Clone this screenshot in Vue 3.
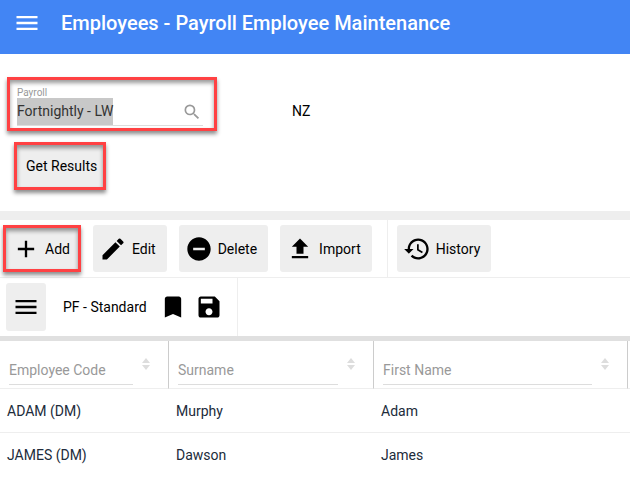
<script setup>
import { onMounted, ref } from 'vue'

const payroll = ref('Fortnightly - LW')
const payrollInput = ref(null)

const icons = {
  menu: 'M3 18h18v-2H3v2zm0-5h18v-2H3v2zm0-7v2h18V6H3z',
  add: 'M19 13h-6v6h-2v-6H5v-2h6V5h2v6h6v2z',
  edit: 'M3 17.25V21h3.75L17.81 9.94l-3.75-3.75L3 17.25zM20.71 7.04a1 1 0 0 0 0-1.41l-2.34-2.34a1 1 0 0 0-1.41 0l-1.83 1.83 3.75 3.75 1.83-1.83z',
  remove: 'M12 2C6.48 2 2 6.48 2 12s4.48 10 10 10 10-4.48 10-10S17.52 2 12 2zm5 11H7v-2h10v2z',
  upload: 'M9 16h6v-6h4l-7-7-7 7h4v6zm-4 2h14v2H5v-2z',
  history: 'M13 3c-4.97 0-9 4.03-9 9H1l3.89 3.89.07.14L9 12H6c0-3.87 3.13-7 7-7s7 3.13 7 7-3.13 7-7 7c-1.93 0-3.68-.79-4.94-2.06l-1.42 1.42C8.27 19.99 10.51 21 13 21c4.97 0 9-4.03 9-9s-4.03-9-9-9zm-1 5v5l4.28 2.54.72-1.21-3.5-2.08V8H12z',
  bookmark: 'M17 3H7c-1.1 0-2 .9-2 2v16l7-3 7 3V5c0-1.1-.9-2-2-2z',
  save: 'M17 3H5c-1.11 0-2 .9-2 2v14c0 1.1.89 2 2 2h14c1.1 0 2-.9 2-2V7l-4-4zm-5 16c-1.66 0-3-1.34-3-3s1.34-3 3-3 3 1.34 3 3-1.34 3-3 3zm3-10H5V5h10v4z',
  search: 'M15.5 14h-.79l-.28-.27A6.47 6.47 0 0 0 16 9.5 6.5 6.5 0 1 0 9.5 16c1.61 0 3.09-.59 4.23-1.57l.27.28v.79l5 4.99L20.49 19l-4.99-5zm-6 0C7.01 14 5 11.99 5 9.5S7.01 5 9.5 5 14 7.01 14 9.5 11.99 14 9.5 14z',
}

const actionGroups = [
  [
    { label: 'Add', icon: 'add', marked: true },
    { label: 'Edit', icon: 'edit' },
    { label: 'Delete', icon: 'remove' },
    { label: 'Import', icon: 'upload' },
  ],
  [{ label: 'History', icon: 'history' }],
]

const columns = [
  { key: 'code', label: 'Employee Code' },
  { key: 'surname', label: 'Surname' },
  { key: 'first', label: 'First Name' },
]
const filters = ref({ code: '', surname: '', first: '' })

const rows = [
  { code: 'ADAM (DM)', surname: 'Murphy', first: 'Adam' },
  { code: 'JAMES (DM)', surname: 'Dawson', first: 'James' },
]

onMounted(() => {
  payrollInput.value.focus()
  payrollInput.value.select()
})
</script>

<template>
  <div class="page">
    <header class="app-bar">
      <button class="plain" type="button" aria-label="Menu">
        <svg class="icon" viewBox="0 0 24 24"><path :d="icons.menu" /></svg>
      </button>
      <h1>Employees - Payroll Employee Maintenance</h1>
    </header>

    <section class="criteria">
      <div class="criteria-row">
        <div class="field marked">
          <label for="payroll">Payroll</label>
          <div class="field-line">
            <input id="payroll" ref="payrollInput" v-model="payroll" type="text" autocomplete="off" spellcheck="false" />
            <button class="plain lookup" type="button" aria-label="Search">
              <svg class="icon small" viewBox="0 0 24 24"><path :d="icons.search" /></svg>
            </button>
          </div>
        </div>
        <span class="country">NZ</span>
      </div>
      <button class="results marked" type="button">Get Results</button>
    </section>

    <div class="toolbar">
      <div v-for="(group, i) in actionGroups" :key="i" class="group">
        <button v-for="a in group" :key="a.label" class="action" :class="{ marked: a.marked }" type="button">
          <svg class="icon" viewBox="0 0 24 24"><path :d="icons[a.icon]" /></svg>
          <span>{{ a.label }}</span>
        </button>
      </div>
    </div>

    <div class="layout-bar">
      <div class="layout-group">
        <button class="layout-menu" type="button" aria-label="Layouts">
          <svg class="icon" viewBox="0 0 24 24"><path :d="icons.menu" /></svg>
        </button>
        <span class="layout-name">PF - Standard</span>
        <button class="plain" type="button" aria-label="Bookmark">
          <svg class="icon" viewBox="0 0 24 24"><path :d="icons.bookmark" /></svg>
        </button>
        <button class="plain" type="button" aria-label="Save">
          <svg class="icon" viewBox="0 0 24 24"><path :d="icons.save" /></svg>
        </button>
      </div>
    </div>

    <table class="grid">
      <colgroup>
        <col class="col-code" />
        <col class="col-surname" />
        <col />
        <col class="col-end" />
      </colgroup>
      <thead>
        <tr>
          <th v-for="c in columns" :key="c.key" scope="col">
            <div class="filter">
              <input v-model="filters[c.key]" type="text" :placeholder="c.label" :aria-label="c.label" />
              <button class="plain sort" type="button" :aria-label="'Sort by ' + c.label">
                <svg viewBox="0 0 8 12"><path d="M0 5l4-5 4 5zM0 7h8l-4 5z" /></svg>
              </button>
            </div>
          </th>
          <td class="end"></td>
        </tr>
      </thead>
      <tbody>
        <tr v-for="r in rows" :key="r.code">
          <td v-for="c in columns" :key="c.key">{{ r[c.key] }}</td>
          <td class="end"></td>
        </tr>
      </tbody>
    </table>
  </div>
</template>

<style>
body {
  margin: 0;
  background: #fff;
}
</style>

<style scoped>
.page,
.page button,
.page input {
  font-family: Roboto, "Liberation Sans", sans-serif;
  font-size: 14px;
  color: #000;
}

.page * {
  box-sizing: border-box;
}

button {
  border: 0;
  padding: 0;
  background: #eee;
  border-radius: 3px;
  cursor: pointer;
}

input {
  min-width: 0;
  border: 0;
  padding: 0;
  outline: 0;
  background: none;
}

.plain {
  display: flex;
  background: none;
}

.icon {
  display: block;
  width: 28px;
  height: 28px;
  fill: currentColor;
}

.icon.small {
  width: 20px;
  height: 20px;
}

.page .marked {
  position: relative;
  border: 3px solid #ff4143;
  border-radius: 0;
  box-shadow: 0 3px 4px rgba(0, 0, 0, 0.45), inset 0 3px 4px rgba(0, 0, 0, 0.4);
}

.app-bar {
  display: flex;
  align-items: center;
  gap: 20px;
  height: 54px;
  padding: 0 13px 8px;
  background: #4285f4;
}

.page .app-bar .plain,
h1 {
  color: #fff;
}

h1 {
  margin: 0;
  font-size: 20px;
  font-weight: 500;
  line-height: 28px;
  white-space: nowrap;
}

.criteria {
  padding: 23px 7px 21px;
  border-bottom: 9px solid #eee;
}

.criteria-row {
  display: flex;
  align-items: center;
  gap: 75px;
}

.field {
  width: 210px;
  height: 54px;
  padding: 7px 11px 0 7px;
}

.field label {
  display: block;
  font-size: 10px;
  line-height: 11px;
  color: #999;
}

.field-line {
  display: flex;
  align-items: center;
  padding-right: 1px;
  border-bottom: 1px solid #ddd;
}

.page .field-line input {
  flex: 1;
  height: 27px;
  line-height: 27px;
  color: #333;
}

.field-line input::selection {
  background: #c8c8c8;
  color: #333;
}

.page .lookup {
  color: #999;
}

.country {
  padding-top: 14px;
}

.results {
  display: block;
  height: 48px;
  margin: 11px 7px 0;
  padding: 0 6px 0 9px;
}

.toolbar {
  display: flex;
  border-bottom: 1px solid #eee;
}

.group {
  display: flex;
  gap: 12px;
  padding: 5px 15px 5px 3px;
}

.group + .group {
  padding-left: 9px;
  border-left: 1px solid #eee;
}

.action {
  display: flex;
  align-items: center;
  gap: 5px;
  height: 47px;
  padding: 0 11px 0 6px;
}

.action.marked {
  padding: 0 8px 0 6px;
}

.layout-bar {
  display: flex;
  border-bottom: 5px solid #e0e0e0;
}

.layout-group {
  display: flex;
  align-items: center;
  gap: 8px;
  padding: 5px 14px 5px 6px;
  border-right: 1px solid #eee;
}

.layout-menu {
  display: grid;
  place-items: center;
  width: 40px;
  height: 48px;
}

.layout-name {
  padding: 0 4px 0 9px;
}

.grid {
  width: 100%;
  table-layout: fixed;
  border-collapse: separate;
  border-spacing: 0;
}

.col-code {
  width: 169px;
}

.col-surname {
  width: 205px;
}

.col-end {
  width: 2px;
}

th,
td {
  padding: 0;
  font-weight: 400;
  text-align: left;
  border-bottom: 1px solid #eee;
}

th {
  height: 48px;
  vertical-align: top;
  border-right: 1px solid #ccc;
}

.filter {
  display: flex;
  gap: 9px;
  padding: 14px 18px 0 9px;
}

.filter input {
  flex: 1;
  height: 30px;
  border-bottom: 1px solid #ddd;
}

.filter input::placeholder {
  color: #999;
  opacity: 1;
}

.sort {
  width: 8px;
  height: 12px;
  margin-top: 3px;
}

.sort svg {
  width: 8px;
  height: 12px;
  fill: #ddd;
}

tbody td {
  height: 44px;
  padding-left: 7px;
  color: #212b3a;
}

tbody tr:last-child td {
  border-bottom-color: transparent;
}

.page .end {
  padding: 0;
}
</style>
